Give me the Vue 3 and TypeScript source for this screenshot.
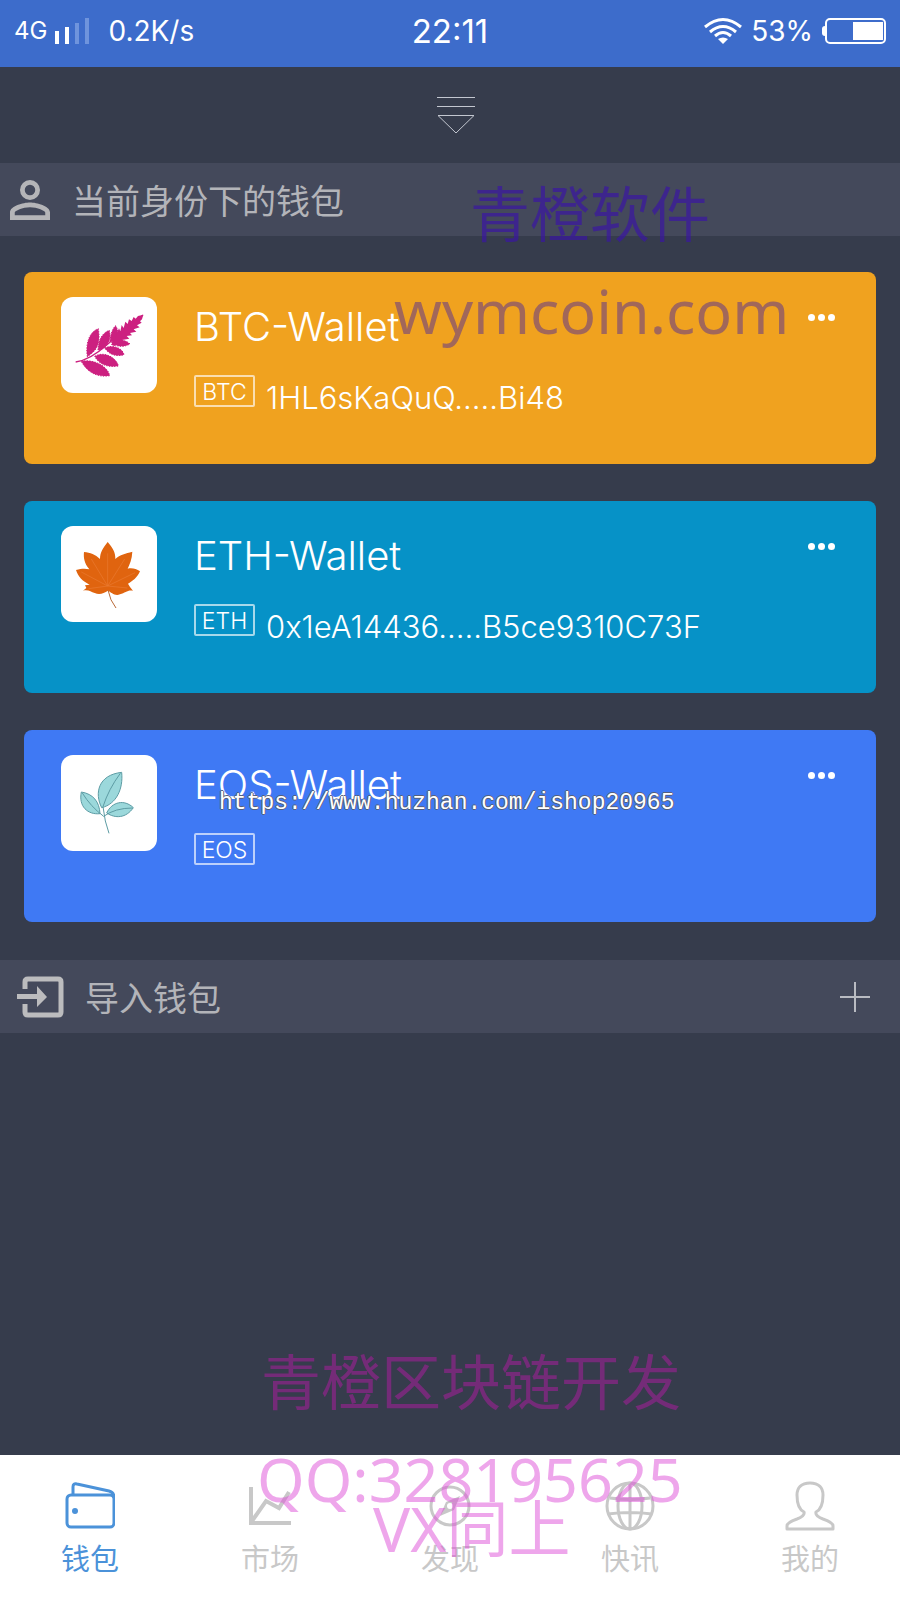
<script setup lang="ts">
import { ref } from 'vue'

type Leaf = 'fern' | 'maple' | 'sprig'

interface Wallet {
  symbol: string
  name: string
  address: string
  leaf: Leaf
}

interface Tab {
  id: string
  label: string
}

const wallets: Wallet[] = [
  { symbol: 'BTC', name: 'BTC-Wallet', address: '1HL6sKaQuQ.....Bi48', leaf: 'fern' },
  { symbol: 'ETH', name: 'ETH-Wallet', address: '0x1eA14436.....B5ce9310C73F', leaf: 'maple' },
  { symbol: 'EOS', name: 'EOS-Wallet', address: '', leaf: 'sprig' },
]

const tabs: Tab[] = [
  { id: 'wallet', label: '钱包' },
  { id: 'market', label: '市场' },
  { id: 'discover', label: '发现' },
  { id: 'news', label: '快讯' },
  { id: 'mine', label: '我的' },
]

const activeTab = ref('wallet')
</script>

<template>
  <div class="screen">
    <header class="status">
      <div class="status-side">
        <span class="network">4G</span>
        <svg class="signal" width="36" height="28" viewBox="0 0 36 28" aria-hidden="true">
          <path d="M1 14h4v13H1zM11 10h4v17h-4z" fill="#fff" />
          <path d="M21 6h4v21h-4zM31 1h4v26h-4z" fill="#6f94dd" />
        </svg>
        <span class="speed">0.2K/s</span>
      </div>
      <time class="clock">22:11</time>
      <div class="status-side status-right">
        <svg width="38" height="28" viewBox="0 0 38 28" aria-hidden="true">
          <g fill="none" stroke="#fff" stroke-width="3">
            <path d="M1 10Q19-5 37 10" />
            <path d="M6 15Q19 4 32 15" />
            <path d="M11 19Q19 12 27 19" />
          </g>
          <path d="M14 22Q19 19 24 22L19 27z" fill="#fff" />
        </svg>
        <span class="percent">53%</span>
        <svg width="65" height="26" viewBox="0 0 65 26" aria-hidden="true">
          <path d="M4 8Q1 8 1 11V15Q1 18 4 18z" fill="#fff" />
          <rect x="5" y="1" width="59" height="24" rx="4" fill="none" stroke="#fff" stroke-width="2" />
          <rect x="32" y="4" width="30" height="18" fill="#fff" />
        </svg>
      </div>
    </header>

    <main class="content">
      <div class="pull">
        <button class="pull-button" type="button" aria-label="下拉">
          <svg width="38" height="40" viewBox="0 0 38 40" aria-hidden="true">
            <path d="M0 2.500h38M0 11.500h38M1 20.500h36L19 38z" fill="none" stroke="#c3c7d0" />
          </svg>
        </button>
      </div>

      <h2 class="bar identity">
        <svg width="60" height="60" viewBox="0 0 24 24" aria-hidden="true">
          <path
            fill="#b5b5b8"
            fill-rule="evenodd"
            d="M12 4a4 4 0 1 0 0 8 4 4 0 0 0 0-8zm0 1.900a2.100 2.100 0 1 1 0 4.200 2.100 2.100 0 0 1 0-4.200zM12 13c-2.670 0-8 1.340-8 4v3h16v-3c0-2.660-5.330-4-8-4zm0 1.900c2.970 0 6.100 1.460 6.100 2.100v1.100H5.900V17c0-.64 3.130-2.100 6.100-2.100z"
          />
        </svg>
        <span>当前身份下的钱包</span>
      </h2>

      <ul class="wallets">
        <li v-for="w in wallets" :key="w.symbol" class="card" :class="w.leaf">
          <div class="tile">
            <svg v-if="w.leaf === 'fern'" viewBox="183 111 288 288" aria-hidden="true">
              <path d="M227 306Q270 300 320 255T429 165" fill="none" stroke="#cc2080" stroke-width="4" />
              <g fill="#cc2080" stroke="#cc2080" stroke-width="3" stroke-dasharray="4 4">
                <path d="M262 290C256 250 268 215 295 206C300 240 298 264 270 284z" />
                <path d="M294 270C296 240 305 220 328 211C334 235 327 257 303 269z" />
                <path d="M330 243C332 220 338 205 347 197C358 215 355 232 342 246z" />
                <path d="M244 304C283 296 324 320 329 347C293 353 262 338 244 304z" />
                <path d="M284 289C315 271 351 296 355 318C325 323 298 315 284 289z" />
                <path d="M314 264C342 252 368 266 372 284C349 291 328 284 314 264z" />
                <path d="M334 247C352 234 380 241 390 252C370 263 348 261 334 247z" />
              </g>
              <path
                fill="#cc2080"
                d="M333 254L346 236 351 218 357 205 361 214 365 195 371 204 376 185 383 192 387 178 395 183 401 171 407 176 414 168 430 164 426 178 420 184 425 188 411 196 419 202 401 208 409 215 390 219 396 226 380 228 388 236 366 240 382 246 356 249 343 258z"
              />
            </svg>
            <svg v-else-if="w.leaf === 'maple'" viewBox="183 108 288 288" aria-hidden="true">
              <path
                fill="#e0640f"
                d="M323 156C337 172 347 187 346 207C360 193 377 191 397 185C396 207 389 223 383 236C397 233 409 237 420 244C412 263 397 274 384 281L390 291 399 302C382 299 376 309 360 313C344 319 334 307 324 302C311 310 299 316 284 309C272 306 266 298 249 302L259 294 255 286 269 284C247 274 234 259 228 240C243 236 255 235 268 238C253 220 250 203 252 186C271 188 286 193 300 207C300 187 309 174 323 156z"
              />
              <path d="M324 300Q330 332 348 354" fill="none" stroke="#b96a38" stroke-width="3" />
              <path
                d="M323 288V190M323 288L274 207M323 288L374 207M323 288L244 246M323 288L405 248M323 288L266 296M323 288L382 294"
                fill="none"
                stroke="#ea7a32"
                stroke-width="2"
              />
            </svg>
            <svg v-else viewBox="183 105 288 288" aria-hidden="true">
              <g fill="#9bd8db" stroke="#5d9ca4" stroke-width="3">
                <path d="M305 263C283 220 294 165 365 157C370 206 350 252 305 263z" />
                <path d="M300 281C263 285 235 259 244 216C280 222 298 245 300 281z" />
                <path d="M320 279C336 245 373 237 400 263C378 295 346 296 320 279z" />
              </g>
              <path
                d="M327 340Q314 306 309 260Q326 207 361 160M311 289Q272 260 247 219M311 289Q345 264 398 264"
                fill="none"
                stroke="#5d9ca4"
                stroke-width="3"
              />
            </svg>
          </div>
          <div class="info">
            <h3 class="name">{{ w.name }}</h3>
            <div class="account">
              <span class="tag">{{ w.symbol }}</span>
              <span v-if="w.address" class="address">{{ w.address }}</span>
            </div>
          </div>
          <button class="more" type="button" :aria-label="w.name + ' 更多'">
            <i></i><i></i><i></i>
          </button>
        </li>
      </ul>

      <button class="bar import" type="button">
        <svg width="48" height="44" viewBox="0 0 48 44" aria-hidden="true">
          <path d="M8 14V7Q8 4 11 4H41Q44 4 44 7V37Q44 40 41 40H11Q8 40 8 37V29" fill="none" stroke="#bcbcbe" stroke-width="5" />
          <path d="M0 19H20V11L30 22 20 32V24H0z" fill="#bcbcbe" />
        </svg>
        <span>导入钱包</span>
        <svg class="plus" width="30" height="30" viewBox="0 0 30 30" aria-hidden="true">
          <path d="M0 15H30M15 0V30" stroke="#b9bbc2" stroke-width="2" />
        </svg>
      </button>
    </main>

    <nav class="tabs">
      <a
        v-for="tab in tabs"
        :key="tab.id"
        class="tab"
        :class="{ active: tab.id === activeTab }"
        :href="'#' + tab.id"
        @click.prevent="activeTab = tab.id"
      >
        <svg width="50" height="50" viewBox="0 0 50 50" fill="none" stroke="currentColor" stroke-width="3" aria-hidden="true">
          <g v-if="tab.id === 'wallet'">
            <rect x="2" y="14" width="47" height="32" rx="4" />
            <path d="M8 14V6Q8 2 12 3L44 10Q49 11 49 17" />
            <circle cx="10" cy="30" r="3" fill="currentColor" stroke="none" />
          </g>
          <g v-else-if="tab.id === 'market'" stroke-width="4">
            <path d="M6 6V42H46M7 40L21 20 34 27 44 11" />
          </g>
          <g v-else-if="tab.id === 'discover'">
            <circle cx="25" cy="25" r="19" />
            <path d="M35 15L29 29 15 35 21 21z" fill="currentColor" stroke="none" />
            <circle cx="25" cy="25" r="3" fill="#fff" stroke="none" />
          </g>
          <g v-else-if="tab.id === 'news'">
            <circle cx="25" cy="25" r="23" />
            <ellipse cx="25" cy="25" rx="12" ry="23" />
            <path d="M25 2V48M5 17Q25 20 45 17M3 33Q25 30 47 33" />
          </g>
          <g v-else>
            <path
              stroke-linejoin="round"
              d="M25 2C16 2 12 7 12 14C12 23 15 29 19 31C20 34 17 36 12 38C6 40 2 42 2 45V48H48V45C48 42 44 40 38 38C33 36 30 34 31 31C35 29 38 23 38 14C38 7 34 2 25 2z"
            />
          </g>
        </svg>
        <span>{{ tab.label }}</span>
      </a>
    </nav>

    <div class="mark mark-name">青橙软件</div>
    <div class="mark mark-site">wymcoin.com</div>
    <div class="mark mark-shop">https://www.huzhan.com/ishop20965</div>
    <div class="mark mark-dev">青橙区块链开发</div>
    <div class="mark mark-qq">QQ:328195625</div>
    <div class="mark mark-vx">VX同上</div>
  </div>
</template>

<style>
body {
  background: #363c4c;
}
</style>

<style scoped>
.screen {
  position: relative;
  display: flex;
  flex-direction: column;
  min-height: 100vh;
  overflow: hidden;
  background: #363c4c;
  font-family: Inter, "Noto Sans CJK SC", sans-serif;
}

.status {
  display: grid;
  grid-template-columns: 1fr auto 1fr;
  align-items: center;
  height: 67px;
  padding: 0 14px 6px;
  box-sizing: border-box;
  background: #3d6ccb;
  color: #fff;
}

.status-side {
  display: flex;
  align-items: center;
}

.status-right {
  justify-content: flex-end;
}

.network {
  font-size: 24px;
}

.signal {
  margin: 0 18px 0 7px;
}

.speed {
  font-size: 28px;
}

.clock {
  font-size: 33px;
}

.percent {
  margin: 0 8px 0 9px;
  font-size: 28px;
}

.content {
  flex: 1;
}

.pull {
  display: flex;
  justify-content: center;
  align-items: center;
  height: 96px;
  padding-left: 12px;
}

.pull-button {
  padding: 0;
  border: 0;
  background: none;
  line-height: 0;
  cursor: pointer;
}

.bar {
  display: flex;
  align-items: center;
  width: 100%;
  height: 73px;
  margin: 0;
  box-sizing: border-box;
  border: 0;
  background: #44495b;
  color: #b3b4b9;
  font-family: "Noto Sans CJK SC", sans-serif;
  font-size: 34px;
  font-weight: 400;
  line-height: 48px;
  text-align: left;
}

.identity {
  gap: 12px;
}

.import {
  gap: 20px;
  padding: 0 30px 0 17px;
  cursor: pointer;
}

.plus {
  margin-left: auto;
}

.wallets {
  display: flex;
  flex-direction: column;
  gap: 37px;
  margin: 0;
  padding: 36px 24px 38px;
  list-style: none;
}

.card {
  display: flex;
  align-items: flex-start;
  min-height: 192px;
  padding: 25px 37px 24px;
  box-sizing: border-box;
  border-radius: 8px;
  color: #fff;
}

.card.fern {
  background: #f0a21f;
}

.card.maple {
  background: #0692c7;
}

.card.sprig {
  background: #3f79f4;
}

.tile {
  width: 96px;
  height: 96px;
  flex: none;
  overflow: hidden;
  border-radius: 12px;
  background: #fff;
}

.tile svg {
  display: block;
  width: 100%;
  height: 100%;
}

.info {
  flex: 1;
  padding: 6px 0 0 37px;
}

.name {
  margin: 0;
  font-size: 40px;
  font-weight: 300;
  line-height: 48px;
}

.account {
  display: flex;
  align-items: flex-start;
  gap: 11px;
  margin-top: 24px;
}

.tag {
  min-width: 61px;
  box-sizing: border-box;
  padding-top: 2px;
  border: 2px solid rgba(255, 255, 255, 0.65);
  border-radius: 2px;
  font-size: 23px;
  font-weight: 300;
  line-height: 26px;
  text-align: center;
}

.address {
  margin-top: 4px;
  font-size: 31px;
  font-weight: 300;
  line-height: 38px;
}

.more {
  display: flex;
  gap: 3px;
  margin-top: 13px;
  padding: 4px;
  border: 0;
  background: none;
  cursor: pointer;
}

.more i {
  width: 7px;
  height: 7px;
  border-radius: 50%;
  background: #fff;
}

.tabs {
  display: grid;
  grid-template-columns: repeat(5, 1fr);
  height: 145px;
  background: #fff;
}

.tab {
  display: flex;
  flex-direction: column;
  align-items: center;
  gap: 6px;
  padding-top: 26px;
  color: #c8c8c8;
  font-family: "Noto Sans CJK SC", sans-serif;
  font-size: 29px;
  font-weight: 400;
  line-height: 40px;
  text-decoration: none;
}

.tab.active {
  color: #4b92d9;
}

.mark {
  position: absolute;
  font-family: "Noto Sans", "Noto Sans CJK SC", sans-serif;
  font-size: 60px;
  line-height: 80px;
  white-space: nowrap;
  pointer-events: none;
}

.mark-name {
  top: 174px;
  left: 470px;
  color: rgba(57, 20, 165, 0.68);
}

.mark-site {
  top: 271px;
  left: 394px;
  font-size: 61px;
  color: rgba(82, 44, 150, 0.5);
}

.mark-shop {
  top: 788px;
  left: 219px;
  color: #fff;
  font-family: "Liberation Mono", monospace;
  font-size: 23px;
  line-height: 30px;
  text-shadow: 1px 0 #56607a, -1px 0 #56607a, 0 1px #56607a, 0 -1px #56607a;
}

.mark-dev {
  bottom: 178px;
  left: 261px;
  color: rgba(158, 31, 150, 0.6);
}

.mark-qq {
  bottom: 81px;
  left: 257px;
  font-size: 61px;
  color: rgba(221, 78, 216, 0.5);
}

.mark-vx {
  bottom: 32px;
  left: 373px;
  font-size: 62px;
  color: rgba(221, 78, 216, 0.5);
}
</style>
